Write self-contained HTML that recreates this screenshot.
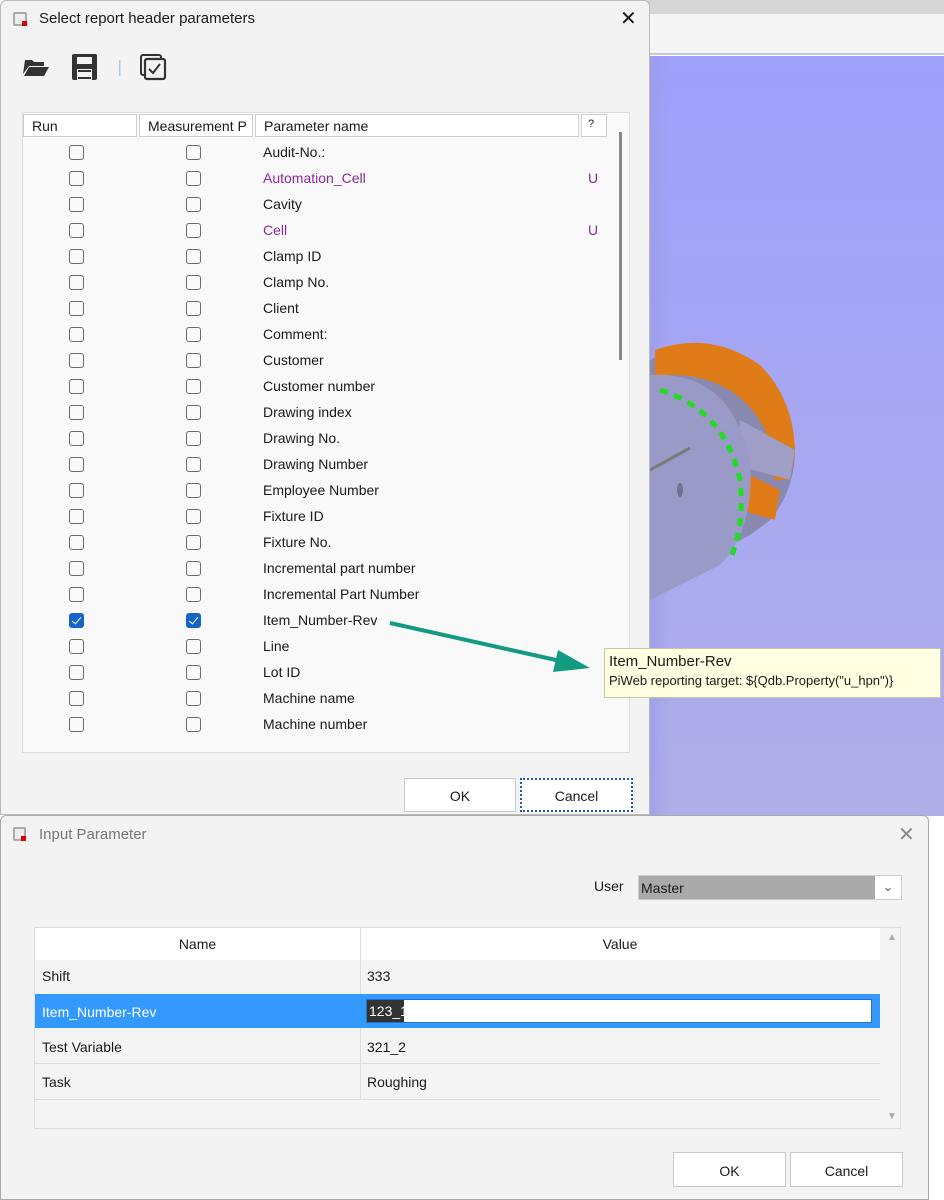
<!DOCTYPE html>
<html><head><meta charset="utf-8"><style>
*{box-sizing:border-box;margin:0;padding:0}
body{width:944px;height:1200px;position:relative;overflow:hidden;background:#fff;font-family:"Liberation Sans",sans-serif;font-size:14px;color:#1a1a1a}
.a{position:absolute}
.cb{position:absolute;width:15px;height:15px;border:1px solid #6b6b6b;border-radius:3px;background:#fafafa}
.cb.on{background:#1464c8;border-color:#1464c8}
.cb.on::after{content:"";position:absolute;left:4px;top:1px;width:4px;height:8px;border:solid #fff;border-width:0 1px 1px 0;transform:rotate(40deg)}
.nm{position:absolute;left:263px;font-size:14px;white-space:nowrap}
.pu{color:#8a2a9a}
.hd{position:absolute;top:114px;height:23px;background:#fff;border:1px solid #cfcfcf;font-size:14px;padding:3px 0 0 8px;white-space:nowrap;overflow:hidden}
.btn{position:absolute;background:#fff;border:1px solid #c8c8c8;text-align:center;font-size:14px}
.cell{position:absolute;font-size:14px;padding-left:7px}
</style></head><body>
<div class="a" style="left:640px;top:0;width:304px;height:14px;background:#d6d6d6"></div>
<div class="a" style="left:640px;top:14px;width:304px;height:41px;background:#f5f5f5;border-bottom:2px solid #c8c8d8"></div>
<div class="a" style="left:640px;top:56px;width:304px;height:760px;background:linear-gradient(180deg,#a0a0fd,#aeaee8)"></div>
<div class="a" style="left:640px;top:56px;width:30px;height:760px;background:linear-gradient(90deg,#9a9ae6,rgba(160,160,253,0))"></div>
<svg class="a" style="left:640px;top:330px" width="170" height="280">
<path d="M10 30 Q60 5 110 30 Q150 60 155 120 Q155 160 130 190 L110 205 Q70 225 10 270 Z" fill="#8a8ab0"/>
<path d="M15 20 Q70 0 120 35 Q155 70 155 125 L150 150 L135 150 L125 100 Q100 50 40 45 L15 45 Z" fill="#e07c18"/>
<path d="M100 90 L155 120 L150 150 L95 135 Z" fill="#9e9ec6"/>
<path d="M100 140 L140 160 L135 190 L100 180 Z" fill="#e07c18"/>
<path d="M10 45 Q90 40 110 130 Q115 200 80 235 L10 270 Z" fill="#9a9ac8"/>
<path d="M20 60 Q85 80 100 150 Q105 195 90 230" stroke="#22dd22" stroke-width="5" fill="none" stroke-dasharray="8 7"/>
<path d="M10 140 L50 118" stroke="#7a7a7a" stroke-width="3"/>
<ellipse cx="40" cy="160" rx="3" ry="7" fill="#707090"/>
</svg>
<div class="a" style="left:0;top:0;width:650px;height:815px;background:#f3f3f3;border:1px solid #bbb;border-radius:6px 6px 0 0"></div>
<div class="a" style="left:13px;top:12px;width:14px;height:14px;border:2px solid #aaa;border-radius:2px;background:#eee"></div>
<div class="a" style="left:22px;top:21px;width:5px;height:5px;background:#d00"></div>
<div class="a" style="left:39px;top:10px;font-size:15px">Select report header parameters</div>
<div class="a" style="left:620px;top:6px;font-size:20px">✕</div>
<svg class="a" style="left:22px;top:54px" width="150" height="28">
<path d="M1 20 L3 6 L10 6 L12 8 L22 8 L22 12 L7 12 Z M2 22 L7 13 L27 13 L22 22 Z" fill="#333"/>
<rect x="50" y="0" width="25" height="26" rx="2" fill="#333"/><rect x="55" y="3" width="15" height="7" fill="#f3f3f3"/><rect x="55" y="15" width="15" height="11" fill="#f3f3f3"/><rect x="56" y="16" width="13" height="9" fill="#333"/><rect x="56" y="18" width="13" height="5" fill="#f3f3f3"/>
<rect x="97" y="6" width="1.5" height="16" fill="#b8c8d8"/>
<rect x="119" y="1" width="20" height="20" rx="2" fill="none" stroke="#333" stroke-width="2"/>
<rect x="123" y="5" width="20" height="20" rx="2" fill="#f3f3f3" stroke="#333" stroke-width="2.2"/>
<path d="M127 15 L131 19 L138 10" stroke="#333" stroke-width="2" fill="none"/>
</svg>
<div class="a" style="left:22px;top:112px;width:608px;height:641px;background:#f9f9f9;border:1px solid #ddd"></div>
<div class="hd" style="left:23px;width:114px">Run</div>
<div class="hd" style="left:139px;width:114px">Measurement P</div>
<div class="hd" style="left:255px;width:324px">Parameter name</div>
<div class="hd" style="left:581px;width:26px;padding-left:6px;font-size:11px">?</div>
<div class="a" style="left:619px;top:132px;width:3px;height:228px;background:#888"></div>

<div class="cb" style="left:69px;top:145px"></div><div class="cb" style="left:186px;top:145px"></div><div class="nm" style="top:144px">Audit-No.:</div>
<div class="cb" style="left:69px;top:171px"></div><div class="cb" style="left:186px;top:171px"></div><div class="nm pu" style="top:170px">Automation_Cell</div><div class="a pu" style="left:588px;top:170px">U</div>
<div class="cb" style="left:69px;top:197px"></div><div class="cb" style="left:186px;top:197px"></div><div class="nm" style="top:196px">Cavity</div>
<div class="cb" style="left:69px;top:223px"></div><div class="cb" style="left:186px;top:223px"></div><div class="nm pu" style="top:222px">Cell</div><div class="a pu" style="left:588px;top:222px">U</div>
<div class="cb" style="left:69px;top:249px"></div><div class="cb" style="left:186px;top:249px"></div><div class="nm" style="top:248px">Clamp ID</div>
<div class="cb" style="left:69px;top:275px"></div><div class="cb" style="left:186px;top:275px"></div><div class="nm" style="top:274px">Clamp No.</div>
<div class="cb" style="left:69px;top:301px"></div><div class="cb" style="left:186px;top:301px"></div><div class="nm" style="top:300px">Client</div>
<div class="cb" style="left:69px;top:327px"></div><div class="cb" style="left:186px;top:327px"></div><div class="nm" style="top:326px">Comment:</div>
<div class="cb" style="left:69px;top:353px"></div><div class="cb" style="left:186px;top:353px"></div><div class="nm" style="top:352px">Customer</div>
<div class="cb" style="left:69px;top:379px"></div><div class="cb" style="left:186px;top:379px"></div><div class="nm" style="top:378px">Customer number</div>
<div class="cb" style="left:69px;top:405px"></div><div class="cb" style="left:186px;top:405px"></div><div class="nm" style="top:404px">Drawing index</div>
<div class="cb" style="left:69px;top:431px"></div><div class="cb" style="left:186px;top:431px"></div><div class="nm" style="top:430px">Drawing No.</div>
<div class="cb" style="left:69px;top:457px"></div><div class="cb" style="left:186px;top:457px"></div><div class="nm" style="top:456px">Drawing Number</div>
<div class="cb" style="left:69px;top:483px"></div><div class="cb" style="left:186px;top:483px"></div><div class="nm" style="top:482px">Employee Number</div>
<div class="cb" style="left:69px;top:509px"></div><div class="cb" style="left:186px;top:509px"></div><div class="nm" style="top:508px">Fixture ID</div>
<div class="cb" style="left:69px;top:535px"></div><div class="cb" style="left:186px;top:535px"></div><div class="nm" style="top:534px">Fixture No.</div>
<div class="cb" style="left:69px;top:561px"></div><div class="cb" style="left:186px;top:561px"></div><div class="nm" style="top:560px">Incremental part number</div>
<div class="cb" style="left:69px;top:587px"></div><div class="cb" style="left:186px;top:587px"></div><div class="nm" style="top:586px">Incremental Part Number</div>
<div class="cb on" style="left:69px;top:613px"></div><div class="cb on" style="left:186px;top:613px"></div><div class="nm" style="top:612px">Item_Number-Rev</div>
<div class="cb" style="left:69px;top:639px"></div><div class="cb" style="left:186px;top:639px"></div><div class="nm" style="top:638px">Line</div>
<div class="cb" style="left:69px;top:665px"></div><div class="cb" style="left:186px;top:665px"></div><div class="nm" style="top:664px">Lot ID</div>
<div class="cb" style="left:69px;top:691px"></div><div class="cb" style="left:186px;top:691px"></div><div class="nm" style="top:690px">Machine name</div>
<div class="cb" style="left:69px;top:717px"></div><div class="cb" style="left:186px;top:717px"></div><div class="nm" style="top:716px">Machine number</div>

<div class="btn" style="left:404px;top:778px;width:112px;height:34px;padding-top:9px">OK</div>
<div class="btn" style="left:520px;top:778px;width:113px;height:34px;padding-top:8px;border:2px dotted #1a5aa8">Cancel</div>
<svg class="a" style="left:380px;top:610px" width="220" height="70">
<line x1="10" y1="13" x2="185" y2="52" stroke="#159a82" stroke-width="4"/>
<path d="M178 40 L210 58 L173 62 Z" fill="#159a82"/>
</svg>
<div class="a" style="left:604px;top:648px;width:337px;height:50px;background:#ffffe1;border:1px solid #c8c8a0;padding:4px 4px">
<div style="font-size:15px">Item_Number-Rev</div>
<div style="font-size:13px;margin-top:3px;white-space:nowrap">PiWeb reporting target: ${Qdb.Property("u_hpn")}</div>
</div>
<div class="a" style="left:0;top:815px;width:929px;height:385px;background:#f3f3f3;border:1px solid #aaa;border-radius:6px 6px 0 0"></div>
<div class="a" style="left:13px;top:827px;width:13px;height:14px;border:2px solid #aaa;border-radius:2px;background:#eee"></div>
<div class="a" style="left:21px;top:836px;width:5px;height:5px;background:#d00"></div>
<div class="a" style="left:39px;top:826px;font-size:15px;color:#777">Input Parameter</div>
<div class="a" style="left:898px;top:822px;font-size:20px;color:#888">✕</div>
<div class="a" style="left:594px;top:878px;font-size:14px">User</div>
<div class="a" style="left:638px;top:875px;width:264px;height:25px;background:#aaa;border:1px solid #ccc;padding:4px 0 0 2px">Master</div>
<div class="a" style="left:875px;top:876px;width:26px;height:23px;background:#fff;text-align:center;font-size:13px;color:#666;padding-top:3px">⌄</div>
<div class="a" style="left:34px;top:927px;width:867px;height:202px;background:#f4f4f4;border:1px solid #ddd"></div>
<div class="a" style="left:35px;top:928px;width:845px;height:32px;background:#fff"></div>
<div class="a" style="left:35px;top:936px;width:325px;text-align:center">Name</div>
<div class="a" style="left:360px;top:936px;width:520px;text-align:center">Value</div>
<div class="a" style="left:360px;top:928px;width:1px;height:172px;background:#ddd"></div>
<div class="cell" style="left:35px;top:968px">Shift</div><div class="cell" style="left:360px;top:968px">333</div>
<div class="a" style="left:35px;top:994px;width:845px;height:34px;background:#3399ff"></div>
<div class="cell" style="left:35px;top:1004px;color:#fff">Item_Number-Rev</div>
<div class="a" style="left:366px;top:999px;width:506px;height:24px;background:#fff;border:1px solid #2a70c0"></div>
<div class="a" style="left:367px;top:1000px;width:37px;height:22px;background:#333;color:#fff;padding:3px 0 0 2px">123_1</div>
<div class="a" style="left:35px;top:1063px;width:845px;height:1px;background:#ddd"></div>
<div class="a" style="left:35px;top:1099px;width:845px;height:1px;background:#ddd"></div>
<div class="cell" style="left:35px;top:1039px">Test Variable</div><div class="cell" style="left:360px;top:1039px">321_2</div>
<div class="cell" style="left:35px;top:1074px">Task</div><div class="cell" style="left:360px;top:1074px">Roughing</div>
<div class="a" style="left:887px;top:932px;color:#aaa;font-size:10px">▲</div>
<div class="a" style="left:887px;top:1111px;color:#aaa;font-size:10px">▼</div>
<div class="btn" style="left:673px;top:1152px;width:113px;height:35px;padding-top:10px">OK</div>
<div class="btn" style="left:790px;top:1152px;width:113px;height:35px;padding-top:10px">Cancel</div>
</body></html>
